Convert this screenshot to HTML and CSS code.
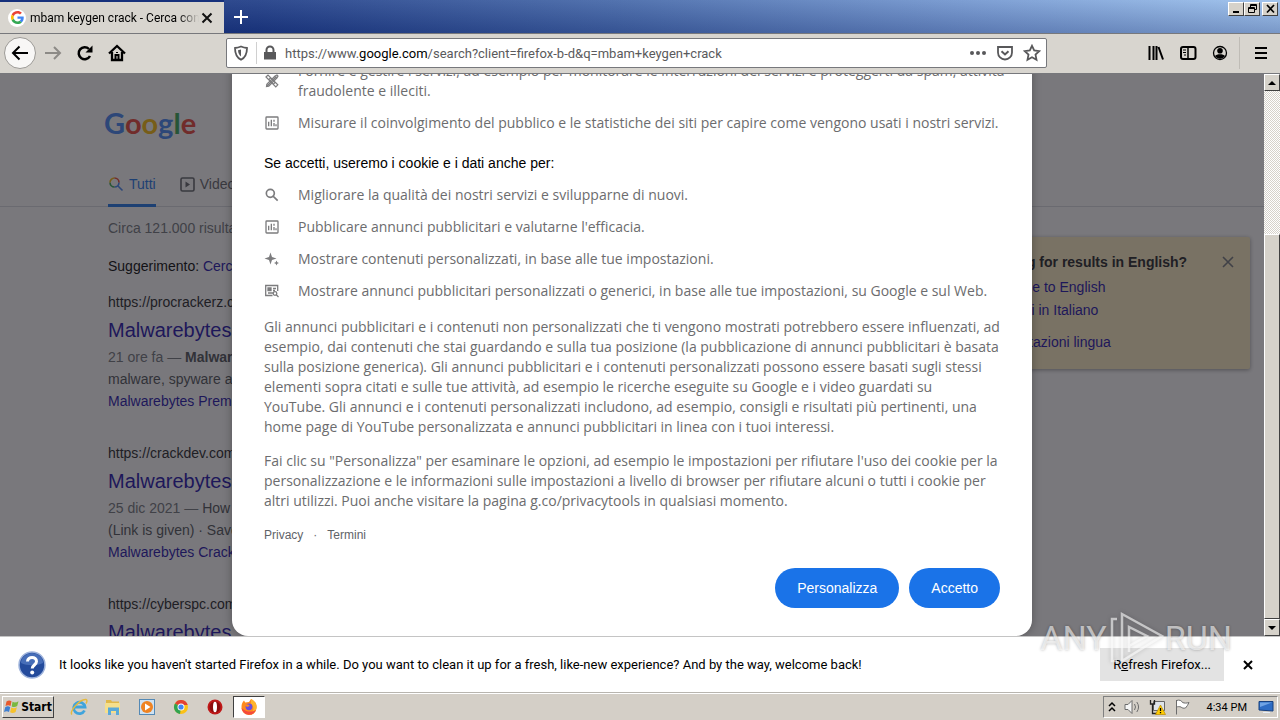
FILE: index.html
```html
<!DOCTYPE html>
<html lang="it">
<head>
    <meta charset="UTF-8">
    <meta name="viewport" content="width=device-width, initial-scale=1.0">
    <title>mbam keygen crack - Cerca con Google</title>
    <link rel="stylesheet" href="styles.css">
</head>
<body>
    <!-- Shared icons -->
    <svg class="sprite" aria-hidden="true">
        <symbol id="g-logo" viewBox="0 0 48 48">
            <path fill="#ea4335" d="M24 9.5c3.5 0 6.700 1.200 9.200 3.600l6.900-6.900C35.900 2.400 30.500 0 24 0 14.600 0 6.500 5.400 2.600 13.200l8 6.200C12.400 13.700 17.700 9.500 24 9.500z"/>
            <path fill="#4285f4" d="M47 24.500c0-1.600-.2-3.100-.4-4.500H24v9h12.900c-.6 3-2.300 5.500-4.800 7.200l7.700 6C44.400 38 47 31.800 47 24.500z"/>
            <path fill="#fbbc05" d="M10.500 28.600c-.5-1.500-.8-3-.8-4.600s.3-3.100.8-4.600l-8-6.200C.9 16.500 0 20.100 0 24s.9 7.500 2.600 10.800l7.900-6.200z"/>
            <path fill="#34a853" d="M24 48c6.500 0 11.900-2.100 15.900-5.800l-7.700-6c-2.200 1.500-4.900 2.300-8.200 2.300-6.300 0-11.600-4.200-13.500-9.900l-8 6.200C6.500 42.600 14.600 48 24 48z"/>
        </symbol>
        <symbol id="chart" viewBox="0 0 24 24">
            <path fill="currentColor" fill-rule="evenodd" d="M4 2h16a2 2 0 0 1 2 2v16a2 2 0 0 1-2 2H4a2 2 0 0 1-2-2V4a2 2 0 0 1 2-2zm0 2v16h16V4zM6 10h2v7H6zM10 7h2v10h-2zM14 7h2v3h-2zM14 12h2v5h-2zM17 14h2v3h-2z"/>
        </symbol>
        <symbol id="search" viewBox="0 0 24 24">
            <path fill="none" stroke="currentColor" stroke-width="2.500" d="M14 14l6.500 6.500M15.500 9.500a6 6 0 1 1-12 0 6 6 0 0 1 12 0z"/>
        </symbol>
    </svg>

    <!-- Tabs -->
    <header class="titlebar">
        <div class="tab">
            <span class="favicon"><svg width="13" height="13"><use href="#g-logo"/></svg></span>
            <span class="tab-title">mbam keygen crack - Cerca con Google</span>
            <button class="tab-close" aria-label="Close tab">
                <svg width="12" height="12" viewBox="0 0 12 12"><path d="M1.500 1.500l9 9m0-9l-9 9" stroke="#111" stroke-width="2"/></svg>
            </button>
        </div>
        <button class="new-tab" aria-label="New tab">
            <svg width="14" height="14" viewBox="0 0 14 14"><path d="M7 0v14M0 7h14" stroke="#fff" stroke-width="2"/></svg>
        </button>
        <div class="window-buttons">
            <button class="win" aria-label="Minimize"><svg width="11" height="10" viewBox="0 0 11 10"><path d="M2 7h6v2H2z"/></svg></button>
            <button class="win" aria-label="Restore"><svg width="11" height="10" viewBox="0 0 11 10" fill="none" stroke="#000"><path d="M3.500 3V.5h6v5H7.500M3 1.500h7"/><path d="M1.500 3.500h6v5h-6zM1 4.500h7"/></svg></button>
            <button class="win win-close" aria-label="Close"><svg width="11" height="10" viewBox="0 0 11 10"><path d="M2 1l7 7.500M9 1L2 8.500" stroke="#000" stroke-width="1.700"/></svg></button>
        </div>
    </header>

    <!-- Toolbar -->
    <nav class="toolbar">
        <button class="tool back" aria-label="Back"><svg width="18" height="18" viewBox="0 0 18 18"><path d="M17 9H2M8.500 2.500L2 9l6.500 6.500"/></svg></button>
        <button class="tool forward" aria-label="Forward"><svg width="18" height="18" viewBox="0 0 18 18"><path d="M1 9h15M10 3l6 6-6 6"/></svg></button>
        <button class="tool" aria-label="Reload"><svg width="18" height="18" viewBox="0 0 18 18"><path d="M14 12A6 6 0 1 1 13 5" stroke-width="2.500"/><path d="M16.500 1.500v7h-7z" fill="#000" stroke="none"/></svg></button>
        <button class="tool" aria-label="Home"><svg width="18" height="18" viewBox="0 0 18 18"><path d="M1 9.500L9 2l8 7.500M4 8v8h10V8" stroke-width="2.300"/><path d="M7.500 16v-5h3v5M9 8v1"/></svg></button>
        <span class="spring"></span>
        <div class="urlbar">
            <svg width="16" height="16" viewBox="0 0 16 16"><path d="M8 1.500C10 2.300 12 2.800 14 3c0 6-1.500 9.500-6 11.800C3.500 12.500 2 9 2 3c2-.2 4-.7 6-1.500z" fill="none" stroke="#58585a" stroke-width="1.800"/><path d="M8 4.500v7C6 10 5.200 8 5 5.300z" fill="#58585a"/></svg>
            <span class="url-sep"></span>
            <svg width="14" height="16" viewBox="0 0 14 16"><path d="M1 7h12v7.500H1z" fill="#58585a"/><path d="M3.500 7.500V5a3.500 3.500 0 0 1 7 0v2.500" fill="none" stroke="#58585a" stroke-width="2"/></svg>
            <div class="url">https://www.<b>google.com</b>/search?client=firefox-b-d&amp;q=mbam+keygen+crack</div>
            <svg width="18" height="16" viewBox="0 0 18 16" fill="#58585a"><circle cx="3" cy="8" r="2"/><circle cx="9" cy="8" r="2"/><circle cx="15" cy="8" r="2"/></svg>
            <svg width="16" height="16" viewBox="0 0 16 16" fill="none" stroke="#58585a" stroke-width="1.800"><path d="M1 2h14v5.500a7 7 0 0 1-14 0z"/><path d="M4.500 6.200L8 9.500l3.500-3.300" stroke-width="2"/></svg>
            <svg width="18" height="18" viewBox="0 0 18 18" fill="none" stroke="#58585a" stroke-width="1.800"><path d="M9 1.800l2.200 4.700 5 .6-3.700 3.500 1 5.100L9 13.200l-4.500 2.500 1-5.100L1.800 7.100l5-.6z"/></svg>
        </div>
        <span class="spring"></span>
        <button class="tool" aria-label="Library"><svg width="18" height="18" viewBox="0 0 18 18"><path d="M2.500 2v14M6.500 2v14M9.500 2v14M11.500 3l4.500 12.500"/></svg></button>
        <button class="tool" aria-label="Sidebars"><svg width="18" height="18" viewBox="0 0 18 18"><rect x="2" y="3" width="14.500" height="12" rx="2"/><path d="M9 3v12" stroke-width="1.500"/><path d="M4 6h3M4 8.500h3M5 11h2" stroke-width="1"/></svg></button>
        <button class="tool" aria-label="Account"><svg width="18" height="18" viewBox="0 0 18 18"><circle cx="9" cy="9" r="6.500" stroke-width="1.300"/><circle cx="9" cy="6.800" r="2.800" fill="#000" stroke="none"/><path d="M4 12c1.500-2.500 8.500-2.500 10 0-2.500 3.500-7.500 3.500-10 0z" fill="#000" stroke="none"/></svg></button>
        <span class="tool-sep"></span>
        <button class="tool" aria-label="Menu"><svg width="18" height="18" viewBox="0 0 18 18"><path d="M3 4h12M3 9h12M3 14h12"/></svg></button>
    </nav>

    <main class="viewport">
        <!-- Results page -->
        <div class="page">
            <div class="logo"><span class="blue">G</span><span class="red">o</span><span class="yellow">o</span><span class="blue">g</span><span class="green">l</span><span class="red">e</span></div>
            <div class="tabs">
                <a href="#" class="tab-link active"><svg width="16" height="16" viewBox="0 0 16 16" fill="none" stroke-width="1.600"><path d="M10 10l4.500 4.500M11 6.500a4.500 4.500 0 0 1-4.500 4.500" stroke="#4285f4"/><path d="M6.500 11A4.500 4.500 0 0 1 2 6.500" stroke="#34a853"/><path d="M2 6.500A4.500 4.500 0 0 1 6.500 2" stroke="#fbbc05"/><path d="M6.500 2A4.500 4.500 0 0 1 11 6.500" stroke="#ea4335"/></svg>Tutti</a>
                <a href="#" class="tab-link"><svg width="15" height="15" viewBox="0 0 15 15"><rect x="1" y="1" width="13" height="13" rx="1.500" fill="none" stroke="currentColor" stroke-width="1.600"/><path d="M5.500 4.500v6l4.500-3z" fill="currentColor"/></svg>Video</a>
            </div>
            <div class="columns">
                <div class="results">
                    <p class="stats">Circa 121.000 risultati</p>
                    <p class="hint">Suggerimento: <a href="#">Cerca</a></p>
                    <article class="result">
                        <cite>https://procrackerz.com</cite>
                        <h3><a href="#">Malwarebytes</a></h3>
                        <p><span class="date">21 ore fa —</span> <b>Malwarebytes</b><br>malware, spyware and</p>
                        <a href="#">Malwarebytes Premium</a>
                    </article>
                    <article class="result">
                        <cite>https://crackdev.com</cite>
                        <h3><a href="#">Malwarebytes</a></h3>
                        <p><span class="date">25 dic 2021 —</span> How<br>(Link is given) · Save</p>
                        <a href="#">Malwarebytes Crack</a>
                    </article>
                    <article class="result">
                        <cite>https://cyberspc.com</cite>
                        <h3><a href="#">Malwarebytes</a></h3>
                    </article>
                </div>
                <aside class="lang-card">
                    <div class="lang-head">
                        <b>Looking for results in English?</b>
                        <button aria-label="Chiudi"><svg width="12" height="12" viewBox="0 0 12 12"><path d="M1 1l10 10M11 1L1 11" stroke="#70757a" stroke-width="1.600"/></svg></button>
                    </div>
                    <a href="#">Change to English</a>
                    <a href="#">Rimani in Italiano</a>
                    <a href="#" class="lang-settings">Impostazioni lingua</a>
                </aside>
            </div>
        </div>

        <!-- Consent dialog -->
        <div class="overlay">
            <section class="consent" role="dialog" aria-label="Cookie">
                <ul>
                    <li><svg width="16" height="16" viewBox="0 0 16 16" fill="none" stroke="currentColor"><path d="M2.500 13.500L12.500 3.500M2.500 13.500l.3-2.300L11 3l2-1 1 1-1 2-8.200 8.200z" stroke-width="1.200"/><path d="M2 4l2-2 9.800 9.800-2 2zM5 6.500L6.500 5M9.500 11L11 9.500" stroke-width="1.200"/></svg>
                        <span>Fornire e gestire i servizi, ad esempio per monitorare le interruzioni dei servizi e proteggerti da spam, attività<br>fraudolente e illeciti.</span></li>
                    <li><svg width="16" height="16"><use href="#chart"/></svg><span>Misurare il coinvolgimento del pubblico e le statistiche dei siti per capire come vengono usati i nostri servizi.</span></li>
                </ul>
                <h2>Se accetti, useremo i cookie e i dati anche per:</h2>
                <ul>
                    <li><svg width="16" height="16"><use href="#search"/></svg><span>Migliorare la qualità dei nostri servizi e svilupparne di nuovi.</span></li>
                    <li><svg width="16" height="16"><use href="#chart"/></svg><span>Pubblicare annunci pubblicitari e valutarne l'efficacia.</span></li>
                    <li><svg width="16" height="16" viewBox="0 0 16 16" fill="currentColor"><path d="M6.500 1.500L8 6l4.500 1.500L8 9l-1.500 4.500L5 9 .5 7.500 5 6zM12.500 9.500l.8 1.700 1.700.8-1.700.8-.8 1.700-.8-1.700-1.700-.8 1.700-.8z"/></svg><span>Mostrare contenuti personalizzati, in base alle tue impostazioni.</span></li>
                    <li><svg width="16" height="16" viewBox="0 0 16 16" fill="none" stroke="currentColor" stroke-width="1.300"><path d="M8.500 12.500H1.700v-10h12v5.500M9 5.500h3M9 7.500h2M4 10h5"/><path d="M4 5h3v2.500H4z" fill="currentColor"/><circle cx="11" cy="10.500" r="1.800"/><path d="M12.300 11.800l2.200 2.200"/></svg><span>Mostrare annunci pubblicitari personalizzati o generici, in base alle tue impostazioni, su Google e sul Web.</span></li>
                </ul>
                <p>Gli annunci pubblicitari e i contenuti non personalizzati che ti vengono mostrati potrebbero essere influenzati, ad<br>
                    esempio, dai contenuti che stai guardando e sulla tua posizione (la pubblicazione di annunci pubblicitari è basata<br>
                    sulla posizione generica). Gli annunci pubblicitari e i contenuti personalizzati possono essere basati sugli stessi<br>
                    elementi sopra citati e sulle tue attività, ad esempio le ricerche eseguite su Google e i video guardati su<br>
                    YouTube. Gli annunci e i contenuti personalizzati includono, ad esempio, consigli e risultati più pertinenti, una<br>
                    home page di YouTube personalizzata e annunci pubblicitari in linea con i tuoi interessi.</p>
                <p>Fai clic su "Personalizza" per esaminare le opzioni, ad esempio le impostazioni per rifiutare l'uso dei cookie per la<br>
                    personalizzazione e le informazioni sulle impostazioni a livello di browser per rifiutare alcuni o tutti i cookie per<br>
                    altri utilizzi. Puoi anche visitare la pagina g.co/privacytools in qualsiasi momento.</p>
                <div class="legal"><a href="#">Privacy</a><span>·</span><a href="#">Termini</a></div>
                <div class="actions">
                    <button>Personalizza</button>
                    <button>Accetto</button>
                </div>
            </section>
        </div>

        <div class="scrollbar">
            <button class="scroll-btn" aria-label="Scroll up"><svg width="8" height="4" viewBox="0 0 8 4"><path d="M4 0l4 4H0z"/></svg></button>
            <div class="track"><div class="thumb"></div></div>
            <button class="scroll-btn" aria-label="Scroll down"><svg width="8" height="4" viewBox="0 0 8 4"><path d="M0 0h8L4 4z"/></svg></button>
        </div>
    </main>

    <!-- Notification bar -->
    <div class="infobar">
        <svg width="28" height="28" viewBox="0 0 28 28">
            <circle cx="14" cy="14" r="13" fill="#244b9c" stroke="#9fb4dc" stroke-width="1.500"/>
            <path d="M3 12a11 10 0 0 1 22 0c-6 3-16 3-22 0z" fill="#5f86cc" opacity=".6"/>
            <path d="M9.500 10.500c.2-5.500 9-5.500 9 0 0 3.500-4.300 3.500-4.300 7" fill="none" stroke="#fff" stroke-width="3"/><circle cx="14.200" cy="21.500" r="2" fill="#fff"/>
        </svg>
        <span class="message">It looks like you haven't started Firefox in a while. Do you want to clean it up for a fresh, like-new experience? And by the way, welcome back!</span>
        <button class="refresh">R<u>e</u>fresh Firefox...</button>
        <button class="info-close" aria-label="Close"><svg width="10" height="10" viewBox="0 0 10 10"><path d="M1 1l8 8M9 1L1 9" stroke="#000" stroke-width="2"/></svg></button>
    </div>

    <!-- Taskbar -->
    <footer class="taskbar">
        <button class="start">
            <svg width="16" height="16" viewBox="0 0 16 16"><path d="M2.500 2.500c2-1.500 3.500-1.200 5-.3L6.500 7C5 6 3.500 6 1.500 7z" fill="#e8592b"/><path d="M8.500 2.700c2 1 3.500 1 6-.5l-1.300 4.900c-2 1.200-3.700 1.200-5.500.3z" fill="#7ab840"/><path d="M1.200 8.200c2-1.200 3.500-1 5 0L5 13c-1.500-1-3-1-5 0z" fill="#3f7fd0"/><path d="M7.300 8.600c2 1 3.500.9 5.600-.3l-1.300 4.800c-2 1.200-3.800 1.200-5.500.2z" fill="#f6c22c"/></svg>
            Start
        </button>
        <button class="task" aria-label="Internet Explorer"><svg width="18" height="18" viewBox="0 0 18 18" fill="none"><path d="M14.500 12.500A5.700 5.700 0 1 1 15 9H5" stroke="#3fa4dc" stroke-width="2.800"/><path d="M2 16.500C-1.500 14 10 .5 16 1.500c1.500.5 1 2.500 0 4" stroke="#e5b93c" stroke-width="1.400"/></svg></button>
        <button class="task" aria-label="Explorer"><svg width="18" height="18" viewBox="0 0 18 18"><path d="M2 2h5l1 1.500h7V9H2z" fill="#e0b84a"/><path d="M1 5h15v10H1z" fill="#f5df8c"/><path d="M4 17V9.500h11V17h-3v-4H7v4z" fill="#5aa9d8"/></svg></button>
        <button class="task" aria-label="Media Player"><svg width="18" height="18" viewBox="0 0 18 18"><rect x="1.500" y="1.500" width="15" height="15" fill="#cfe2f2" stroke="#5489b5"/><circle cx="9" cy="9" r="6" fill="#ef8322"/><path d="M7 5.500v7L12.500 9z" fill="#fff"/></svg></button>
        <button class="task" aria-label="Chrome"><svg width="16" height="16" viewBox="0 0 16 16"><circle cx="8" cy="8" r="7" fill="#fbc116"/><path d="M8 8L2 4.400A7 7 0 0 1 14.700 6H8z" fill="#e34133"/><path d="M8 8l-1 7A7 7 0 0 1 2 4.400z" fill="#31a350"/><circle cx="8" cy="8" r="3.500" fill="#fff"/><circle cx="8" cy="8" r="2.600" fill="#4285f4"/></svg></button>
        <button class="task" aria-label="Opera"><svg width="18" height="18" viewBox="0 0 18 18"><circle cx="9" cy="9" r="7.500" fill="#c01818"/><circle cx="9" cy="9" r="5.500" fill="#8b0d0d"/><ellipse cx="9" cy="9" rx="2" ry="5.300" fill="#fff"/></svg></button>
        <button class="task open" aria-label="Firefox"><svg width="18" height="18" viewBox="0 0 18 18"><path d="M1.500 9c0-3 1-5 2.500-6.500l1.200 2L9 4l2-3c4 2 6 5 5.500 9a7.500 7.500 0 0 1-15-1z" fill="#ff8a1e"/><path d="M11 1c4 2 6 5 5.500 9-.5 4-3.500 6.700-7.500 6.700 6-3 5-9 2-11z" fill="#ffb52c"/><path d="M1.500 10c1 4.500 4 6.700 7.500 6.700s6-2 7-5c-4 3-10 2.500-14.500-1.700z" fill="#f54a3c"/><circle cx="9" cy="8.800" r="3.400" fill="#6a4de0"/><path d="M4.500 6.500c3-.8 5 .2 5 1.500L7 9z" fill="#ff8a1e"/></svg></button>
        <div class="tray">
            <svg width="8" height="12" viewBox="0 0 8 12" fill="none" stroke="#000" stroke-width="1.500"><path d="M1 5l3-3 3 3M1 10l3-3 3 3"/></svg>
            <svg width="17" height="16" viewBox="0 0 17 16" fill="#f5f5f5" stroke="#6c6c6c"><path d="M1 5.500h3l4-4v13l-4-4H1z"/><path d="M10.500 5q2 3 0 6M12.800 3q3.500 5 0 10" fill="none"/></svg>
            <svg width="17" height="16" viewBox="0 0 17 16"><path d="M4.500 2.500h11v9h-11z" fill="#dfe4ea" stroke="#666"/><path d="M1.500 1v4h4V1M3.500 5v9.500H8" fill="none" stroke="#222" stroke-width="1.300"/><path d="M11.500 6l5 9.500h-10z" fill="#fc0" stroke="#b98a00" stroke-width=".7"/><path d="M11.500 9v3M11.500 13v1.300" stroke="#000" stroke-width="1.300"/></svg>
            <svg width="17" height="16" viewBox="0 0 17 16" fill="#fff" stroke="#6c6c6c"><path d="M2.500 1v14.500M2.500 1.500c3-1 5 0 6 2 2 .8 4 .8 6.500 0-1 2-2 4-3.500 5.500-2 .5-3.500 0-4.500-1-1.500-.5-3-.5-4.500 0"/></svg>
            <time class="clock">4:34 PM</time>
            <svg width="16" height="14" viewBox="0 0 16 14"><path d="M1 1.500h14v9.500L1 10z" fill="#2d6cc4" stroke="#17407f"/><path d="M2 2.500h12L2 7z" fill="#6fa3e4"/><path d="M5 12h7v1H5z" fill="#e8eef6"/></svg>
        </div>
    </footer>

    <div class="watermark" aria-hidden="true">
        <span>ANY</span>
        <svg width="58" height="54" viewBox="0 0 58 54" fill="none" stroke="#fff" stroke-opacity=".6" stroke-width="2.500"><path d="M10 8H5v42h5"/><path d="M15 50V3l40 22-40 25M22 41V16l18 9-18 10"/></svg>
        <span>RUN</span>
    </div>
</body>
</html>
```
FILE: styles.css
```css
* {
    box-sizing: border-box;
}

body {
    margin: 0;
    height: 100vh;
    display: flex;
    flex-direction: column;
    overflow: hidden;
    position: relative;
    font-family: Roboto, "Liberation Sans", sans-serif;
    font-size: 13px;
    color: #000;
    background: #d8d5cf;
}

button {
    border: 0;
    padding: 0;
    background: none;
    font: inherit;
    color: inherit;
    display: flex;
    align-items: center;
    justify-content: center;
}

p, h2, h3, ul {
    margin: 0;
    padding: 0;
}

a {
    text-decoration: none;
}

svg {
    flex-shrink: 0;
}

.sprite {
    position: absolute;
    width: 0;
    height: 0;
}

/* Title bar */
.titlebar {
    display: flex;
    flex: 0 0 33px;
    background: linear-gradient(rgba(255, 255, 255, 0.08), rgba(0, 10, 70, 0.22)), linear-gradient(90deg, #16317c 0, #1e3c86 20%, #4467a8 48%, #7296cf 75%, #9bc0ec 100%);
    border-bottom: 1px solid #77787c;
}

.tab {
    display: flex;
    align-items: center;
    width: 224px;
    height: 33px;
    padding: 0 11px 0 8px;
    font-size: 12px;
    background: #d8d5cf;
    border-top: 2px solid #16317c;
}

.favicon {
    display: flex;
    align-items: center;
    justify-content: center;
    width: 18px;
    height: 18px;
    margin-right: 4px;
    border-radius: 50%;
    background: #fff;
}

.tab-title {
    flex: 1;
    overflow: hidden;
    white-space: nowrap;
    -webkit-mask-image: linear-gradient(90deg, #000 88%, transparent);
    mask-image: linear-gradient(90deg, #000 88%, transparent);
}

.tab-close {
    margin-left: 2px;
}

.new-tab {
    width: 34px;
}

.window-buttons {
    display: flex;
    margin-left: auto;
    padding: 2px 2px 0 0;
}

.win {
    width: 16px;
    height: 14px;
    background: #d6d2ca;
    border: 1px solid;
    border-color: #fff #404040 #404040 #fff;
}

.win-close {
    margin-left: 2px;
}

/* Toolbar */
.toolbar {
    display: flex;
    align-items: center;
    flex: 0 0 40px;
    padding: 0 3px 1px 4px;
    border-bottom: 1px solid #77787c;
}

.tool {
    width: 32px;
    height: 32px;
}

.tool svg {
    fill: none;
    stroke: #000;
    stroke-width: 2;
}

.back {
    background: #f8f7f6;
    border: 1px solid #9c9a96;
    border-radius: 50%;
    margin-right: 1px;
}

.forward svg {
    stroke: #8c8a86;
}

.spring {
    flex: 0 0 93px;
}

.urlbar {
    flex: 1;
    display: flex;
    align-items: center;
    height: 30px;
    padding: 0 5px 0 6px;
    gap: 10px;
    background: #fff;
    border: 1px solid #77787c;
    border-radius: 2px;
}

.url-sep {
    width: 1px;
    height: 22px;
    margin: 0 -4px 0 -3px;
    background: #d0d0d0;
}

.url {
    flex: 1;
    margin-left: -2px;
    color: #5a5a5c;
}

.url b {
    font-weight: 400;
    color: #000;
}

.tool-sep {
    width: 1px;
    height: 32px;
    margin: 0 5px 0 3px;
    background: #bfbcb6;
}

/* Page area */
.viewport {
    position: relative;
    flex: 1;
    display: flex;
    min-height: 0;
    overflow: hidden;
    font-family: "Liberation Sans", Arial, sans-serif;
    font-size: 14px;
    line-height: 22px;
    background: #fff;
}

.page {
    flex: 1;
    min-width: 0;
    overflow: hidden;
}

.page a {
    color: #1a0dab;
}

.logo {
    padding: 27px 0 0 104px;
    font-family: Lato, sans-serif;
    font-size: 29px;
    font-weight: 700;
    line-height: 44px;
}

.blue { color: #4285f4; }
.red { color: #ea4335; }
.yellow { color: #fbbc05; }
.green { color: #34a853; }

.tabs {
    display: flex;
    gap: 24px;
    margin-top: 17px;
    padding-left: 108px;
    border-bottom: 1px solid #dadce0;
}

.page .tab-link {
    display: flex;
    align-items: center;
    gap: 5px;
    height: 45px;
    margin-bottom: -1px;
    padding-top: 2px;
    border-bottom: 3px solid transparent;
    color: #5f6368;
}

.page .tab-link.active {
    color: #1a73e8;
    border-color: #1a73e8;
}

.columns {
    display: flex;
    justify-content: space-between;
    align-items: flex-start;
    padding: 10px 14px 0 108px;
}

.results {
    width: 600px;
}

.stats {
    color: #70757a;
}

.hint {
    margin: 16px 0 14px;
}

.result {
    height: 151px;
    color: #4d5156;
}

.result cite {
    display: block;
    font-style: normal;
    color: #202124;
}

.result h3 {
    margin: 5px 0 4px;
    font-size: 20px;
    font-weight: 400;
    line-height: 24px;
}

.date {
    color: #70757a;
}

/* Language card */
.lang-card {
    width: 370px;
    margin-top: 20px;
    padding: 14px 16px 15px 101px;
    background: #fff0c2;
    border-radius: 2px;
    box-shadow: 0 1px 4px rgba(0, 0, 0, 0.4);
}

.lang-head {
    display: flex;
    justify-content: space-between;
    margin-bottom: 3px;
    color: #202124;
}

.lang-card a {
    display: block;
    padding-left: 10px;
    line-height: 23px;
}

.lang-card .lang-settings {
    margin-top: 9px;
}

/* Consent dialog */
.overlay {
    position: absolute;
    inset: 0 16px 0 0;
    display: flex;
    justify-content: center;
    align-items: flex-end;
    background: rgba(32, 30, 36, 0.6);
}

.consent {
    width: 800px;
    padding: 32px 24px 28px 32px;
    font-family: "Open Sans", "Liberation Sans", sans-serif;
    line-height: 20px;
    white-space: nowrap;
    color: #6c6c6e;
    background: #fff;
    border-radius: 16px;
    box-shadow: 0 0 10px rgba(0, 0, 0, 0.3);
}

.consent ul {
    display: flex;
    flex-direction: column;
    gap: 12px;
    list-style: none;
}

.consent li {
    display: flex;
    align-items: center;
    gap: 18px;
}

.consent li svg {
    color: #7c7c7e;
}

.consent h2 {
    margin: 20px 0 12px;
    font-family: "Liberation Sans", sans-serif;
    font-size: 14px;
    font-weight: 400;
    color: #000;
}

.consent p {
    margin-top: 14px;
}

.consent ul + p {
    margin-top: 16px;
}

.legal {
    display: flex;
    gap: 10px;
    margin-top: 14px;
    font-family: "Liberation Sans", sans-serif;
    font-size: 12px;
}

.legal a {
    color: #5f6368;
}

.actions {
    display: flex;
    justify-content: flex-end;
    gap: 10px;
    margin: 23px 8px 0 0;
    font-family: "Liberation Sans", sans-serif;
}

.actions button {
    height: 40px;
    padding: 0 22px;
    color: #fff;
    background: #1a73e8;
    border-radius: 20px;
}

/* Scrollbar */
.scrollbar {
    width: 16px;
    display: flex;
    flex-direction: column;
    background: #ece9e4;
}

.scroll-btn {
    height: 17px;
}

.scroll-btn, .thumb {
    background: #d6d2ca;
    border: 1px solid;
    border-color: #fff #404040 #404040 #fff;
}

.track {
    flex: 1;
    display: flex;
    align-items: flex-end;
    background: repeating-conic-gradient(#d6d2ca 0 25%, #fff 0 50%) 0 0 / 2px 2px;
}

.thumb {
    width: 100%;
    height: 73%;
}

/* Notification bar */
.infobar {
    flex: 0 0 57px;
    display: flex;
    align-items: center;
    padding: 0 24px 0 18px;
    background: #fff;
    border-top: 1px solid #c4c4c4;
    border-bottom: 1px solid #b8b5af;
}

.message {
    flex: 1;
    margin-left: 13px;
}

.refresh {
    height: 33px;
    padding: 0 13px;
    background: #e3e3e3;
}

.info-close {
    width: 24px;
    height: 24px;
    margin-left: 12px;
    margin-right: -4px;
}

/* Taskbar */
.taskbar {
    flex: 0 0 27px;
    display: flex;
    align-items: center;
    padding: 0 2px;
    background: #d4cfc7;
    border-top: 1px solid #fff;
}

.start {
    width: 52px;
    height: 22px;
    margin-right: 9px;
    gap: 1px;
    font-family: "DejaVu Sans Condensed", sans-serif;
    font-size: 12px;
    font-weight: 700;
    border: 1px solid;
    border-color: #fff #404040 #404040 #fff;
}

.task {
    width: 32px;
    height: 22px;
    margin-right: 2px;
}

.open {
    background: #fff;
    border: 1px solid;
    border-color: #404040 #fff #fff #404040;
}

.tray {
    display: flex;
    align-items: center;
    gap: 8px;
    height: 22px;
    margin-left: auto;
    padding: 0 3px 0 4px;
    border: 1px solid;
    border-color: #808080 #fff #fff #808080;
}

.clock {
    margin: 0 3px 0 8px;
    font-size: 11px;
}

/* Watermark */
.watermark {
    position: absolute;
    right: 48px;
    bottom: 54px;
    display: flex;
    align-items: center;
    font-size: 34px;
    line-height: 56px;
    color: rgba(255, 255, 255, 0.6);
    text-shadow: 0 0 3px rgba(0, 0, 0, 0.3);
    pointer-events: none;
}

.watermark svg {
    filter: drop-shadow(0 0 2px rgba(0, 0, 0, 0.3));
}
```
